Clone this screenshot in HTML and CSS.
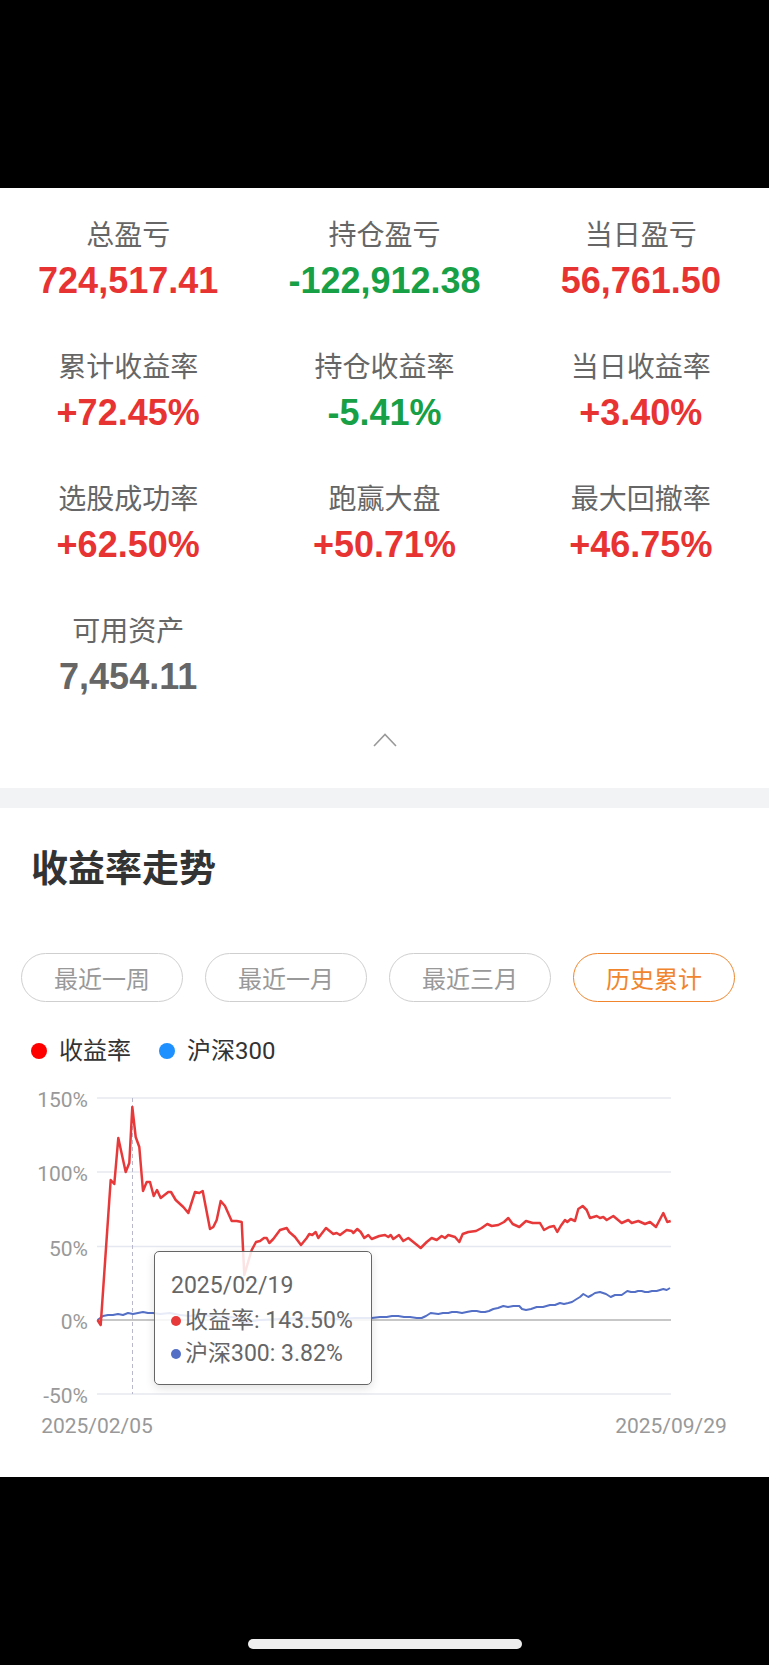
FILE: index.html
```html
<!DOCTYPE html>
<html lang="zh-CN">
  <head>
    <meta charset="UTF-8" />
    <meta name="viewport" content="width=device-width, initial-scale=1.0" />
    <title>收益率走势</title>
    <link rel="stylesheet" href="styles.css">
  </head>
  <body>
    <div class="status-bar"></div>

    <!-- 资产概览 -->
    <section class="stats">
      <div class="stats-grid">
        <div class="stat">
          <div class="stat-label">总盈亏</div>
          <div class="stat-value up">724,517.41</div>
        </div>
        <div class="stat">
          <div class="stat-label">持仓盈亏</div>
          <div class="stat-value down">-122,912.38</div>
        </div>
        <div class="stat">
          <div class="stat-label">当日盈亏</div>
          <div class="stat-value up">56,761.50</div>
        </div>
        <div class="stat">
          <div class="stat-label">累计收益率</div>
          <div class="stat-value up">+72.45%</div>
        </div>
        <div class="stat">
          <div class="stat-label">持仓收益率</div>
          <div class="stat-value down">-5.41%</div>
        </div>
        <div class="stat">
          <div class="stat-label">当日收益率</div>
          <div class="stat-value up">+3.40%</div>
        </div>
        <div class="stat">
          <div class="stat-label">选股成功率</div>
          <div class="stat-value up">+62.50%</div>
        </div>
        <div class="stat">
          <div class="stat-label">跑赢大盘</div>
          <div class="stat-value up">+50.71%</div>
        </div>
        <div class="stat">
          <div class="stat-label">最大回撤率</div>
          <div class="stat-value up">+46.75%</div>
        </div>
        <div class="stat">
          <div class="stat-label">可用资产</div>
          <div class="stat-value plain">7,454.11</div>
        </div>
      </div>
      <div class="collapse">
        <svg width="24" height="14" viewBox="0 0 24 14">
          <polyline points="1,13 12,1.5 23,13" fill="none" stroke="#999" stroke-width="1.6" />
        </svg>
      </div>
    </section>

    <div class="gap"></div>

    <!-- 收益率走势 -->
    <section class="trend">
      <h2 class="trend-title">收益率走势</h2>

      <div class="ranges">
        <button class="range">最近一周</button>
        <button class="range">最近一月</button>
        <button class="range">最近三月</button>
        <button class="range active">历史累计</button>
      </div>

      <div class="legend">
        <span class="legend-item"><i class="dot dot-red"></i>收益率</span>
        <span class="legend-item"><i class="dot dot-blue"></i>沪深300</span>
      </div>

      <div class="chart">
        <svg class="chart-svg" width="769" height="380" viewBox="0 1070 769 380">
          <!-- grid -->
          <g stroke="#e6e8f1" stroke-width="1.5">
            <line x1="97" y1="1098" x2="671" y2="1098" />
            <line x1="97" y1="1172" x2="671" y2="1172" />
            <line x1="97" y1="1246.5" x2="671" y2="1246.5" />
            <line x1="97" y1="1394" x2="671" y2="1394" />
          </g>
          <line x1="97" y1="1320" x2="671" y2="1320" stroke="#b4b4b4" stroke-width="1.5" />
          <line x1="132.5" y1="1098" x2="132.5" y2="1394" stroke="#b9b9cc" stroke-width="1" stroke-dasharray="4 3" />

          <g class="axis-label" text-anchor="end">
            <text x="88" y="1107">150%</text>
            <text x="88" y="1181">100%</text>
            <text x="88" y="1256">50%</text>
            <text x="88" y="1329">0%</text>
            <text x="88" y="1403">-50%</text>
          </g>
          <g class="axis-label" text-anchor="middle">
            <text x="97" y="1433">2025/02/05</text>
            <text x="671" y="1433">2025/09/29</text>
          </g>

          <polyline fill="none" stroke="#5470c6" stroke-width="2" stroke-linejoin="round"
            points="97.5,1320 103,1316 108,1315 113,1315 118,1314 123,1315 128,1313 133,1314 138,1313 143,1312 148,1313 153,1313 160,1314 170,1313 180,1315 190,1316 200,1314 210,1316 220,1318 230,1317 240,1318 246,1324 252,1321 260,1320 280,1319 300,1318 320,1318 340,1319 355,1318 371.7,1318 380,1317 386.7,1317 392,1316 398.3,1316 404,1317 410,1317 416.7,1318 421.7,1318 426,1316 430.7,1313 438.3,1314 443,1313 448.3,1313 452,1312 456.7,1312 462,1313 466.7,1312 472,1311 476.7,1311 481,1312 485,1312 489,1311 493.3,1309 498,1308 503.3,1306 508,1307 513.3,1306 519.3,1306 522,1309 526,1310 531,1309 536.7,1307 543,1307 550,1305 555,1305 560,1303 564,1304 568.3,1303 572,1302 576.7,1299 580,1297 583.3,1294 588.3,1297 592,1295 595,1293 600,1292 603,1293 606,1294 610.7,1297 615,1295 618,1295 621.7,1295 627.3,1291 631,1292 635,1292 638,1291 641.7,1291 645,1292 648.3,1292 652,1291 656.7,1291 660,1290 663.3,1289 666.7,1290 670,1288" />

          <polyline fill="none" stroke="#e8393a" stroke-width="2.5" stroke-linejoin="round"
            points="97.5,1320 100.7,1325 110.7,1180 114.3,1184 118.3,1138 125.7,1172 129.3,1163 132.3,1107 135.7,1137 139.3,1147 143,1191 146.7,1182 150,1182 153.7,1196 157,1190 160.7,1198 168.3,1192 171,1192 175.7,1200 183.3,1207 188.3,1213 195,1192 199.3,1193 202.7,1191 210,1229 213.3,1227 216.7,1220 220.7,1201 225,1206 231.7,1221 236.7,1221 241.7,1222 244.3,1275 251.7,1250 256,1242 260,1241 264,1238 266.7,1238 269.3,1243 273.3,1239 280,1230 286.7,1228 289.3,1232 295,1237 301,1245 306.7,1238 309.3,1234 312.3,1235 315.7,1232 318.3,1238 326,1228 333.3,1234 336.7,1233 340,1235 346.7,1230 351.7,1231 353.3,1233 357.3,1229 360.7,1232 364.3,1238 368.3,1235 371.7,1239 379.3,1236 385,1235 388.3,1237 390.7,1235 393.3,1239 399,1235 403.3,1241 408.3,1238 413.3,1242 420.7,1248 426.7,1242 431.7,1238 436.7,1240 441.7,1236 445,1238 448.3,1235 455,1237 459.3,1242 462.7,1234 468.3,1232 476,1231 481.7,1228 487.3,1224 491.7,1226 498.3,1225 504,1222 508.3,1218 512.7,1224 519.3,1227 526,1221 532.7,1223 540,1223 544,1230 549.3,1227 554,1226 557.3,1232 560.7,1226 565,1220 567.3,1222 570.7,1219 575,1221 578.3,1209 582.7,1206 586.7,1210 590,1218 596.7,1216 600,1218 603.3,1217 606.7,1220 613.3,1216 621.7,1223 628.3,1220 631.7,1223 638.3,1221 645,1224 650,1222 656,1227 663.3,1213 667.3,1222 670.7,1221" />
        </svg>

        <div class="tooltip">
          <div class="tooltip-date">2025/02/19</div>
          <div class="tooltip-row"><i class="tip-dot tip-red"></i>收益率: 143.50%</div>
          <div class="tooltip-row"><i class="tip-dot tip-blue"></i>沪深300: 3.82%</div>
        </div>
      </div>
    </section>

    <div class="home-bar">
      <span class="home-indicator"></span>
    </div>
  </body>
</html>
```

FILE: styles.css
```css
* {
  margin: 0;
  padding: 0;
  box-sizing: border-box;
}

body {
  width: 769px;
  background-color: #000;
  font-family: "Noto Sans CJK SC", sans-serif;
  color: #333;
}

.status-bar {
  height: 188px;
  background-color: #000;
}

/* Overview numbers */
.stats {
  background-color: #fff;
  padding-top: 27px;
  padding-bottom: 41px;
}

.stats-grid {
  display: grid;
  grid-template-columns: repeat(3, 1fr);
  row-gap: 44px;
}

.stat {
  text-align: center;
}

.stat-label {
  font-size: 28px;
  line-height: 36px;
  color: #666;
  margin-bottom: 8px;
}

.stat-value {
  font-family: "Liberation Sans", Arial, sans-serif;
  font-weight: bold;
  font-size: 36px;
  line-height: 44px;
}

.stat-value.up {
  color: #e83333;
}

.stat-value.down {
  color: #17a045;
}

.stat-value.plain {
  color: #666;
}

.collapse {
  display: flex;
  justify-content: center;
  margin-top: 34px;
  height: 14px;
}

.gap {
  height: 20px;
  background-color: #f2f3f5;
}

/* Trend chart */
.trend {
  background-color: #fff;
  padding-top: 33px;
  padding-bottom: 27px;
}

.trend-title {
  font-size: 37px;
  line-height: 50px;
  font-weight: bold;
  color: #333;
  padding-left: 31px;
}

.ranges {
  display: flex;
  gap: 22px;
  padding-left: 21px;
  margin-top: 62px;
}

.range {
  width: 162px;
  height: 49px;
  border: 1.5px solid #cfcfcf;
  border-radius: 25px;
  background: #fff;
  font-family: "Noto Sans CJK SC", sans-serif;
  font-size: 24px;
  color: #999;
}

.range.active {
  border-color: #f0852d;
  color: #f0852d;
}

.legend {
  display: flex;
  gap: 28px;
  padding-left: 31px;
  margin-top: 34px;
  font-family: Roboto, "Noto Sans CJK SC", sans-serif;
  font-size: 24px;
  line-height: 30px;
  color: #333;
}

.legend-item {
  display: flex;
  align-items: center;
  gap: 12px;
}

.dot {
  width: 16px;
  height: 16px;
  border-radius: 50%;
}

.dot-red {
  background-color: #f00;
}

.dot-blue {
  background-color: #1e90ff;
}

.chart {
  position: relative;
  margin-top: 4px;
  height: 380px;
}

.chart-svg {
  display: block;
}

.axis-label {
  font-family: Roboto, sans-serif;
  font-size: 21px;
  fill: #999;
}

.tooltip {
  position: absolute;
  left: 154px;
  top: 181px;
  width: 218px;
  height: 134px;
  padding: 17px 0 0 16px;
  border: 1.5px solid #666;
  border-radius: 5px;
  background: rgba(255, 255, 255, 0.86);
  box-shadow: 0 3px 10px rgba(0, 0, 0, 0.12);
  font-family: Roboto, "Noto Sans CJK SC", sans-serif;
  font-size: 23px;
  line-height: 33px;
  color: #666;
}

.tooltip-date {
  margin-bottom: 2px;
}

.tooltip-row {
  display: flex;
  align-items: center;
  white-space: nowrap;
}

.tip-dot {
  width: 10px;
  height: 10px;
  border-radius: 50%;
  margin-right: 4px;
}

.tip-red {
  background-color: #e8393a;
}

.tip-blue {
  background-color: #5470c6;
}

.home-bar {
  height: 188px;
  background-color: #000;
  display: flex;
  justify-content: center;
  padding-top: 162px;
}

.home-indicator {
  width: 274px;
  height: 10px;
  border-radius: 5px;
  background-color: #eee;
}
```
